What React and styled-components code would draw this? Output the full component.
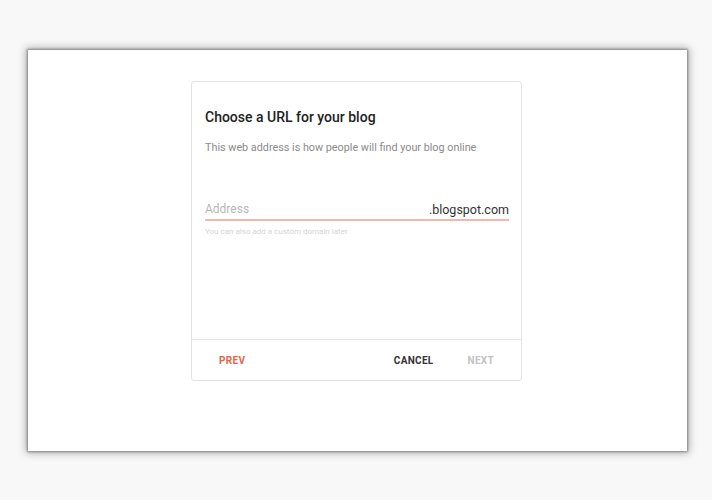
import React from 'react';
import styled, { createGlobalStyle } from 'styled-components';

const GlobalStyle = createGlobalStyle`
  html, body {
    margin: 0;
    background: #f8f8f8;
  }
  body {
    font-family: Roboto, "Noto Sans", Arial, sans-serif;
  }
`;

const Page = styled.div`
  padding: 50px 0 0 28px;
  height: 500px;
  box-sizing: border-box;
`;

const Panel = styled.div`
  width: 659px;
  height: 401px;
  background: #fff;
  box-shadow: 0 0 2px 1px rgba(0, 0, 0, 0.35), 0 0 8px 2px rgba(0, 0, 0, 0.3);
  display: flex;
  justify-content: center;
  padding: 31px 2px 0 0;
  box-sizing: border-box;
`;

const Dialog = styled.div`
  width: 331px;
  height: 300px;
  border: 1px solid #e3e3e3;
  border-radius: 3px;
  box-sizing: border-box;
  display: flex;
  flex-direction: column;
`;

const Body = styled.div`
  flex: 1;
  padding: 26px 12px 0 13px;
`;

const Title = styled.h2`
  margin: 0;
  font-size: 14px;
  line-height: 18px;
  font-weight: 500;
  color: #222;
`;

const Subtitle = styled.p`
  margin: 15px 0 0;
  font-size: 10.8px;
  line-height: 14px;
  color: #8a8a8a;
`;

const Field = styled.div`
  margin-top: 44px;
  display: flex;
  align-items: center;
  justify-content: space-between;
  height: 20px;
  border-bottom: 2px solid #f2b9aa;
`;

const Placeholder = styled.span`
  font-size: 12px;
  color: #b8b8b8;
`;

const Suffix = styled.span`
  font-size: 12.5px;
  color: #333;
`;

const Helper = styled.div`
  margin-top: 6px;
  font-size: 8px;
  line-height: 10px;
  color: #d4d4d4;
`;

const Footer = styled.div`
  height: 40px;
  border-top: 1px solid #e6e6e6;
  display: flex;
  align-items: center;
  padding: 0 13px 0 13px;
`;

const Button = styled.button`
  background: none;
  border: none;
  padding: 6px 14px;
  font-family: inherit;
  font-size: 10px;
  font-weight: 700;
  letter-spacing: 0.3px;
  color: ${(p) => p.$color};
  cursor: pointer;
  margin-left: ${(p) => (p.$push ? 'auto' : '0')};
  margin-right: ${(p) => p.$gap || 0}px;
`;

export default function App() {
  return (
    <>
      <GlobalStyle />
      <Page>
        <Panel>
          <Dialog>
            <Body>
              <Title>Choose a URL for your blog</Title>
              <Subtitle>This web address is how people will find your blog online</Subtitle>
              <Field>
                <Placeholder>Address</Placeholder>
                <Suffix>.blogspot.com</Suffix>
              </Field>
              <Helper>You can also add a custom domain later</Helper>
            </Body>
            <Footer>
              <Button $color="#e0664a">PREV</Button>
              <Button $color="#333" $push $gap={6}>CANCEL</Button>
              <Button $color="#c2c2c2">NEXT</Button>
            </Footer>
          </Dialog>
        </Panel>
      </Page>
    </>
  );
}
